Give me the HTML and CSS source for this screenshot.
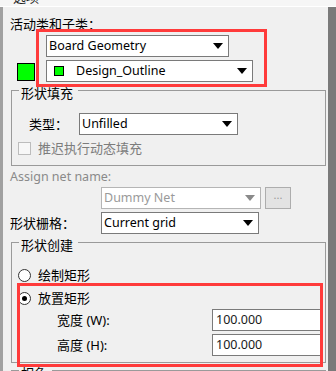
FILE: index.html
```html
<!DOCTYPE html>
<html lang="zh-CN">
<head>
<meta charset="utf-8">
<title>Options</title>
<link rel="stylesheet" href="styles.css">
</head>
<body>
<div class="topbar"><span class="title">选项</span></div>
<div class="frame">
  <div class="edge"></div>
  <div class="main">
    <div class="caption">活动类和子类：</div>
    <div class="class-row">
      <div class="swatch"></div>
      <div class="selects">
        <div class="select w183"><span class="latin">Board Geometry</span><i class="arrow"></i></div>
        <div class="select w207"><span class="chip"></span><span class="latin">Design_Outline</span><i class="arrow"></i></div>
      </div>
      <div class="mark mark1"></div>
    </div>

    <div class="group g1">
      <div class="group-head"><span class="legend">形状填充</span></div>
      <div class="group-body body1">
        <div class="type-row">
          <span class="type-label">类型：</span>
          <div class="select w159"><span class="latin">Unfilled</span><i class="arrow"></i></div>
        </div>
        <div class="check-row">
          <span class="checkbox"></span>
          <span class="muted">推迟执行动态填充</span>
        </div>
      </div>
    </div>

    <div class="net-label latin">Assign net name:</div>
    <div class="net-row">
      <div class="select w160 disabled"><span class="latin">Dummy Net</span><i class="arrow"></i></div>
      <div class="dots">...</div>
    </div>
    <div class="grid-row">
      <span class="grid-label">形状栅格：</span>
      <div class="select w158"><span class="latin">Current grid</span><i class="arrow"></i></div>
    </div>

    <div class="group g2">
      <div class="group-head"><span class="legend">形状创建</span></div>
      <div class="group-body body2">
        <div class="radio-row r1"><span class="radio"></span><span>绘制矩形</span></div>
        <div class="radio-row r2"><span class="radio on"></span><span>放置矩形</span></div>
        <div class="size-row s1"><span class="size-label">宽度 (W):</span><div class="input latin">100.000</div></div>
        <div class="size-row s2"><span class="size-label">高度 (H):</span><div class="input latin">100.000</div></div>
        <div class="mark mark2"></div>
      </div>
    </div>

    <div class="group g3">
      <div class="group-head"><span class="legend">相色</span></div>
    </div>
  </div>
  <div class="scrollbar"></div>
</div>
</body>
</html>
```

FILE: styles.css
```css
* { box-sizing: border-box; }
html, body {
  margin: 0;
  padding: 0;
}
body {
  width: 336px;
  height: 371px;
  overflow: hidden;
  background: #f0f0f0;
  font-family: "Noto Sans", "Noto Sans CJK SC", sans-serif;
  font-size: 13px;
  line-height: 16px;
  color: #000;
}
.latin {
  font-family: "Noto Sans", sans-serif;
  font-size: 12.5px;
}
.topbar {
  height: 7px;
  background: #f6f6f6;
  border-bottom: 1px solid #ffffff;
  overflow: hidden;
  padding-left: 13px;
}
.title {
  display: block;
  margin-top: -11px;
  color: #222;
}
.frame {
  display: flex;
  height: 364px;
}
.edge {
  width: 3px;
  background: #a0a0a0;
}
.scrollbar {
  width: 8px;
  background: #7a7a7a;
}
.main {
  flex: 1;
  padding-left: 7px;
  overflow: hidden;
}
.caption {
  margin-top: 9px;
  height: 16px;
}
.class-row {
  position: relative;
  display: flex;
  margin-top: 3px;
  margin-left: 7px;
}
.swatch {
  width: 18px;
  height: 18px;
  background: #00ff00;
  border: 1px solid #000;
  align-self: flex-end;
  margin-bottom: 1px;
}
.selects {
  display: flex;
  flex-direction: column;
  gap: 3px;
  margin-left: 11px;
}
.select {
  height: 22px;
  background: #fff;
  border: 1px solid #7a7a7a;
  display: flex;
  align-items: center;
  padding-left: 2px;
  padding-right: 5px;
}
.select .latin { flex: 1; white-space: nowrap; }
.w183 { width: 183px; }
.w207 { width: 207px; }
.w159 { width: 159px; }
.w160 { width: 160px; }
.w158 { width: 158px; }
.arrow {
  width: 0;
  height: 0;
  border-left: 5px solid transparent;
  border-right: 5px solid transparent;
  border-top: 6px solid #000;
}
.chip {
  width: 10px;
  height: 10px;
  background: #00ff00;
  border: 1px solid #000;
  margin-left: 5px;
  margin-right: 12px;
}
.mark {
  position: absolute;
  border: 3px solid #ff3b3b;
  pointer-events: none;
}
.mark1 {
  left: 19px;
  top: -6px;
  width: 231px;
  height: 58px;
}

/* group boxes */
.group {
  margin-left: 1px;
  margin-right: 2px;
}
.group-head {
  display: flex;
  height: 16px;
}
.group-head::before,
.group-head::after {
  content: "";
  height: 11px;
  margin-top: 5px;
  border-top: 1px solid #9a9a9a;
}
.group-head::before {
  width: 7px;
  border-left: 1px solid #9a9a9a;
}
.group-head::after {
  flex: 1;
  border-right: 1px solid #9a9a9a;
}
.legend {
  padding: 0 5px 0 2px;
  white-space: nowrap;
}
.group-body {
  position: relative;
  border: 1px solid #9a9a9a;
  border-top: none;
}
.g1 { margin-top: 3px; }
.body1 {
  padding: 12px 0 9px 0;
}
.type-row {
  display: flex;
  align-items: center;
  padding-left: 17px;
}
.type-label { width: 50px; }
.check-row {
  display: flex;
  align-items: center;
  margin-top: 5px;
  padding-left: 6px;
  height: 16px;
}
.checkbox {
  width: 13px;
  height: 13px;
  border: 1px solid #bcbcbc;
  background: #f7f7f7;
  margin-right: 7px;
}
.muted { color: #7c7c7c; }

.net-label {
  margin-top: 3px;
  height: 16px;
  line-height: 16px;
  color: #8a8a8a;
}
.net-row {
  display: flex;
  margin-top: 2px;
  padding-left: 91px;
}
.disabled {
  border-color: #b5b5b5;
}
.disabled .latin { color: #9a9a9a; }
.disabled .arrow { border-top-color: #8a8a8a; }
.dots {
  width: 26px;
  height: 22px;
  margin-left: 4px;
  background: #e3e3e3;
  border: 1px solid #adadad;
  color: #9a9a9a;
  font-size: 11px;
  line-height: 14px;
  text-align: center;
  font-family: "Noto Sans", sans-serif;
}
.grid-row {
  display: flex;
  align-items: center;
  margin-top: 3px;
}
.grid-label { width: 91px; }

.g2 { margin-top: 3px; }
.body2 {
  padding: 14px 0 6px 0;
}
.radio-row {
  display: flex;
  align-items: center;
  height: 16px;
  padding-left: 6px;
}
.r2 { margin-top: 7px; }
.radio {
  width: 13px;
  height: 13px;
  border-radius: 50%;
  border: 1px solid #333;
  background: #fff;
  margin-right: 7px;
  display: flex;
  align-items: center;
  justify-content: center;
}
.radio.on::after {
  content: "";
  width: 5px;
  height: 5px;
  border-radius: 50%;
  background: #000;
}
.size-row {
  display: flex;
  align-items: center;
  padding-left: 45px;
  margin-top: 3px;
}
.size-label { width: 155px; }
.input {
  width: 109px;
  height: 22px;
  background: #fff;
  border: 1px solid #7a7a7a;
  padding-left: 3px;
  line-height: 20px;
  color: #1a1a1a;
}
.mark2 {
  left: 5px;
  top: 30px;
  width: 306px;
  height: 84px;
}
.g3 { margin-top: 2px; }
```
